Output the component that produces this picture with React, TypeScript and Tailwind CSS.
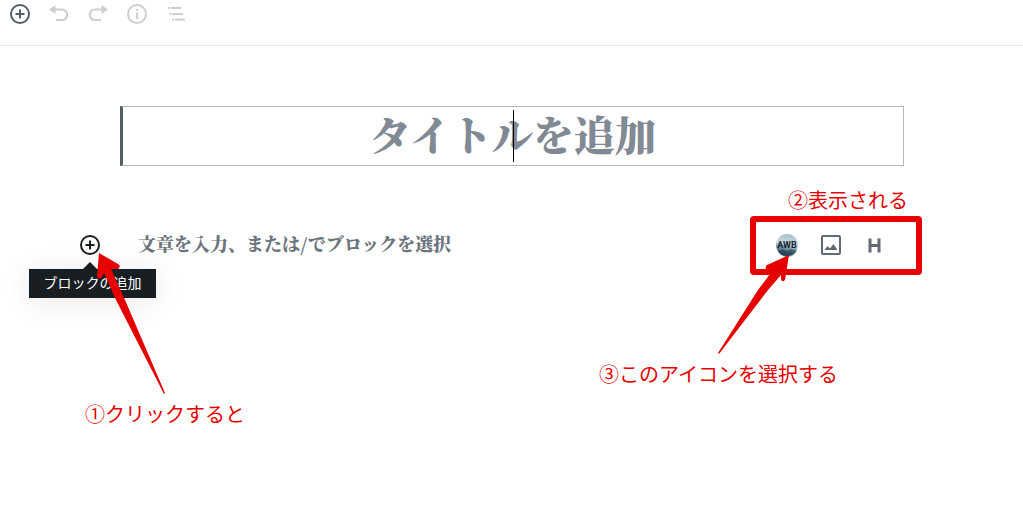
import { useState } from "react";

const UndoIcon = ({ flipped = false }: { flipped?: boolean }) => (
  <svg viewBox="0 0 20 20" className={`h-5 w-5 ${flipped ? "-scale-x-100" : ""}`} fill="none" aria-hidden="true">
    <path d="M5 5.500h8a5 5 0 0 1 0 10.500H7" stroke="currentColor" strokeWidth="2.200" />
    <path d="M0 5.500l6.500-4.500v9z" fill="currentColor" />
  </svg>
);

const InserterIcon = () => (
  <svg viewBox="0 0 20 20" className="h-5 w-5" fill="none" stroke="currentColor" strokeWidth="2" aria-hidden="true">
    <circle cx="10" cy="10" r="9" />
    <path d="M10 5.500v9M5.500 10h9" />
  </svg>
);

const InfoIcon = () => (
  <svg viewBox="0 0 20 20" className="h-5 w-5" fill="none" stroke="currentColor" aria-hidden="true">
    <circle cx="10" cy="10" r="9" strokeWidth="2" />
    <path d="M10 8.500v6.500M10 5v2" strokeWidth="2" />
  </svg>
);

const OutlineIcon = () => (
  <svg viewBox="0 0 20 20" className="h-5 w-5" fill="none" stroke="currentColor" strokeWidth="2" aria-hidden="true">
    <path d="M2 4h2M5 4h10M3.500 10h2M6.500 10h10.500M6 15.500h2M9 15.500h10" />
  </svg>
);

const ImageIcon = () => (
  <svg viewBox="0 0 22 22" className="h-[22px] w-[22px]" fill="none" aria-hidden="true">
    <rect x="2" y="2" width="18" height="18" rx="1" stroke="currentColor" strokeWidth="2" />
    <path d="M4.500 16l3-4 2.500 2.500 3.500-4.500L17.500 16z" fill="currentColor" />
  </svg>
);

const HeadingIcon = () => (
  <svg viewBox="0 0 22 22" className="h-[22px] w-[22px]" fill="none" stroke="currentColor" strokeWidth="3" aria-hidden="true">
    <path d="M7 4.500v14M16 4.500v14M7 11.500h9" />
  </svg>
);

const AwbIcon = () => (
  <svg viewBox="0 0 24 24" className="h-6 w-6" aria-hidden="true">
    <defs>
      <linearGradient id="awb" x1="0.600" y1="0" x2="0.400" y2="1">
        <stop offset="0" stopColor="#a9bfc9" />
        <stop offset="0.450" stopColor="#cbdae1" />
        <stop offset="0.650" stopColor="#7695a6" />
        <stop offset="1" stopColor="#17384e" />
      </linearGradient>
    </defs>
    <circle cx="12" cy="12" r="11" fill="url(#awb)" />
    <path d="M3 18l5-2 4 2 4-2 6 2a11 11 0 0 1-19 1z" fill="#17384e" opacity="0.500" />
    <text x="12" y="15" textAnchor="middle" fontSize="9" fontWeight="bold" fontFamily="Roboto, sans-serif" fill="#14232e">
      AWB
    </text>
  </svg>
);

const toolbar = [
  { label: "ブロックの追加", icon: <InserterIcon />, color: "text-[#555d66]" },
  { label: "元に戻す", icon: <UndoIcon />, color: "text-[#cccfd1]" },
  { label: "やり直す", icon: <UndoIcon flipped />, color: "text-[#cccfd1]" },
  { label: "コンテンツ構造", icon: <InfoIcon />, color: "text-[#cccfd1]" },
  { label: "ブロックナビゲーション", icon: <OutlineIcon />, color: "text-[#cccfd1]" },
];

const App = () => {
  const [title, setTitle] = useState("");
  const [text, setText] = useState("");

  return (
    <div className="relative min-h-screen overflow-hidden bg-white font-['Noto_Sans_CJK_JP',sans-serif]">
      <header className="flex h-[46px] items-start gap-[19px] border-b border-[#e2e4e7] px-[10px]">
        {toolbar.map((item) => (
          <button key={item.label} type="button" aria-label={item.label} className={`flex h-7 w-5 items-center justify-center ${item.color}`}>
            {item.icon}
          </button>
        ))}
      </header>

      <main className="px-[120px] pt-[60px]">
        <div className="relative -mr-px flex h-[60px] border border-l-[3px] border-[#b4b8bb] border-l-[#555d66]">
          <input
            aria-label="タイトルを追加"
            placeholder="タイトルを追加"
            value={title}
            onChange={(e) => setTitle(e.target.value)}
            className="w-full min-w-0 bg-transparent pb-1 text-center font-['Noto_Serif_CJK_JP','Noto_Sans_CJK_JP',serif] text-[41px] font-black outline-none placeholder:text-[#818a94]"
          />
          <span className="absolute inset-y-[3px] left-1/2 w-px bg-black" />
        </div>

        <div className="-ml-10 mt-[49px] flex h-[60px] items-center">
          <div className="relative flex">
            <button type="button" aria-label="ブロックの追加" className="text-[#191e23]">
              <InserterIcon />
            </button>
            {/* Tooltip */}
            <div role="tooltip" className="absolute left-1/2 top-[34px] w-[127px] -translate-x-[61px]">
              <svg viewBox="0 0 14 7" className="absolute -top-[7px] left-[54px] h-[7px] w-[14px] fill-[#191e23]" aria-hidden="true">
                <path d="M0 7l7-7 7 7z" />
              </svg>
              <div className="h-[29px] bg-[#191e23] text-center text-sm leading-[26px] text-white shadow-[0_3px_30px_rgba(25,30,35,0.1)]">
                ブロックの追加
              </div>
            </div>
          </div>
          <input
            aria-label="文章を入力、または/でブロックを選択"
            placeholder="文章を入力、または/でブロックを選択"
            value={text}
            onChange={(e) => setText(e.target.value)}
            className="ml-[38px] min-w-0 flex-1 bg-transparent pb-1 font-['Noto_Serif_CJK_JP','Noto_Sans_CJK_JP',serif] text-lg font-black outline-none placeholder:text-[#6c747d]"
          />
          <div className="-mr-[19px] flex h-[59px] w-[172px] items-center gap-[21px] rounded-sm border-[6px] border-[#e60000] pl-[19px] text-[#636a73]">
            <button type="button" aria-label="AWB"><AwbIcon /></button>
            <button type="button" aria-label="画像"><ImageIcon /></button>
            <button type="button" aria-label="見出し"><HeadingIcon /></button>
          </div>
        </div>
      </main>

      {/* Annotations */}
      <div className="pointer-events-none absolute inset-0 text-xl leading-[30px] text-[#e60000]">
        <p className="absolute left-[85px] top-[399px]">①クリックすると</p>
        <p className="absolute right-[115px] top-[185px]">②表示される</p>
        <p className="absolute right-[185px] top-[359px]">③このアイコンを選択する</p>
        <svg viewBox="0 0 70 143" className="absolute left-[96px] top-[252px] h-[143px] w-[70px] fill-current" aria-hidden="true">
          <path d="M3 1L22 12q3 2 1 4q-1 2-4 1L15 17L29 48L69 141L68 142L20 48L8 21L6 25q-2 3-5 0z" />
        </svg>
        <svg viewBox="0 0 74 102" className="absolute right-[232px] top-[253px] h-[102px] w-[74px] fill-current" aria-hidden="true">
          <path d="M72 2L50 12q-2 2-1 4q1 2 4 2L56 17L41 37L1 100L2 101L51 37L64 22L64 26q1 4 4 1z" />
        </svg>
      </div>
    </div>
  );
};

export default App;
